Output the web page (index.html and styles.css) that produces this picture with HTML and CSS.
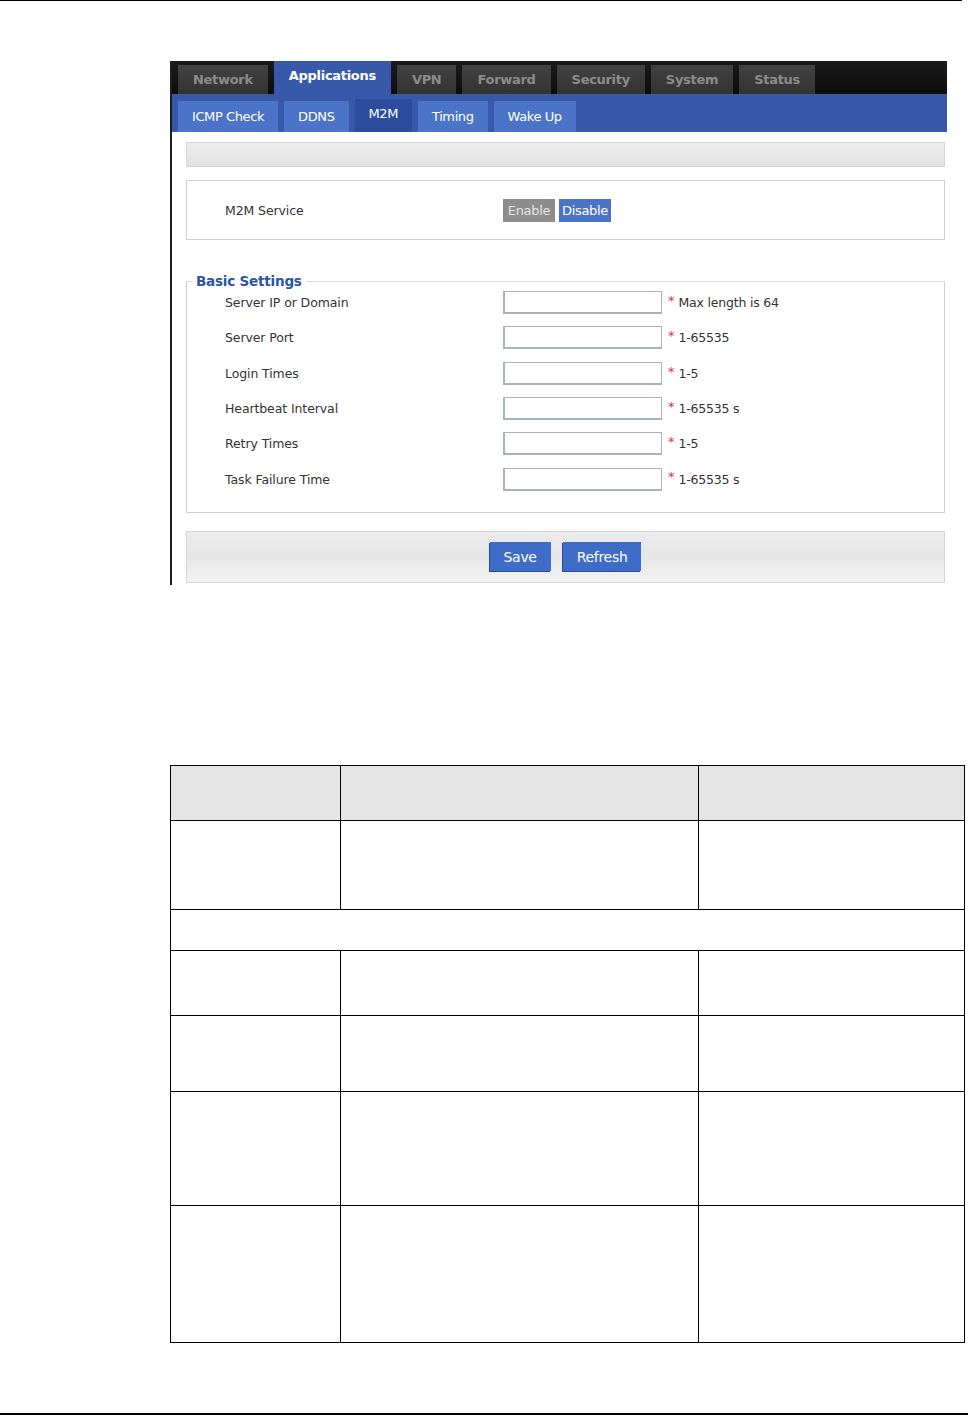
FILE: index.html
```html
<!DOCTYPE html>
<html lang="en">
<head>
  <meta charset="UTF-8">
  <title>M2M</title>
  <link rel="stylesheet" href="styles.css">
</head>
<body>
  <div class="rule top"></div>

  <div class="shot">
    <div class="main-tabs">
      <span class="tab">Network</span>
      <span class="tab active">Applications</span>
      <span class="tab">VPN</span>
      <span class="tab">Forward</span>
      <span class="tab">Security</span>
      <span class="tab">System</span>
      <span class="tab">Status</span>
    </div>
    <div class="sub-tabs">
      <span class="sub">ICMP Check</span>
      <span class="sub">DDNS</span>
      <span class="sub active">M2M</span>
      <span class="sub">Timing</span>
      <span class="sub">Wake Up</span>
    </div>

    <div class="content">
      <div class="bar"></div>

      <div class="box service">
        <span class="label">M2M Service</span>
        <span class="switch">
          <button class="btn off">Enable</button>
          <button class="btn on">Disable</button>
        </span>
      </div>

      <fieldset class="box settings">
        <legend>Basic Settings</legend>
        <div class="row"><span class="label">Server IP or Domain</span><input type="text"><span class="req">*</span><span class="hint">Max length is 64</span></div>
        <div class="row"><span class="label">Server Port</span><input type="text"><span class="req">*</span><span class="hint">1-65535</span></div>
        <div class="row"><span class="label">Login Times</span><input type="text"><span class="req">*</span><span class="hint">1-5</span></div>
        <div class="row"><span class="label">Heartbeat Interval</span><input type="text"><span class="req">*</span><span class="hint">1-65535 s</span></div>
        <div class="row"><span class="label">Retry Times</span><input type="text"><span class="req">*</span><span class="hint">1-5</span></div>
        <div class="row"><span class="label">Task Failure Time</span><input type="text"><span class="req">*</span><span class="hint">1-65535 s</span></div>
      </fieldset>

      <div class="actions">
        <button class="btn save">Save</button>
        <button class="btn refresh">Refresh</button>
      </div>
    </div>
  </div>

  <table class="params">
    <thead>
      <tr class="r-head"><th></th><th></th><th></th></tr>
    </thead>
    <tbody>
      <tr class="r1"><td></td><td></td><td></td></tr>
      <tr class="r2"><td colspan="3"></td></tr>
      <tr class="r3"><td></td><td></td><td></td></tr>
      <tr class="r4"><td></td><td></td><td></td></tr>
      <tr class="r5"><td></td><td></td><td></td></tr>
      <tr class="r6"><td></td><td></td><td></td></tr>
    </tbody>
  </table>

  <div class="rule bottom"></div>
</body>
</html>
```

FILE: styles.css
```css
:root {
  --blue: #3858a9;
  --blue-tab: #4b74c8;
  --blue-dark: #2c4d9c;
  --line: #cfcfcf;
  --text: #333;
}

body {
  margin: 0;
  background: #fff;
  font-family: 'DejaVu Sans', Verdana, sans-serif;
  color: var(--text);
}

.rule {
  height: 1px;
  background: #000;
}

.rule.top {
  width: 962px;
}

.rule.bottom {
  width: 968px;
  margin-top: 70px;
  height: 2px;
}

.shot {
  margin: 60px 0 0 170px;
  width: 775px;
  border-left: 2px solid #1e1e1e;
}

.main-tabs {
  display: flex;
  align-items: flex-end;
  gap: 6px;
  height: 33px;
  padding-left: 6px;
  background: linear-gradient(#1b1b1b, #0c0c0c);
}

.tab {
  display: flex;
  align-items: center;
  justify-content: center;
  height: 29px;
  padding: 0 15px;
  background: linear-gradient(#424242, #333);
  color: #8c8c8c;
  font-size: 13px;
  font-weight: bold;
  letter-spacing: -0.3px;
}

.tab.active {
  height: 33px;
  padding: 0 15px 4px;
  box-sizing: border-box;
  background: var(--blue);
  color: #fff;
}

.sub-tabs {
  display: flex;
  align-items: flex-end;
  gap: 6px;
  height: 38px;
  padding-left: 6px;
  background: var(--blue);
}

.sub {
  display: flex;
  align-items: center;
  justify-content: center;
  height: 31px;
  padding: 0 14px;
  background: var(--blue-tab);
  color: #fff;
  font-size: 13px;
  letter-spacing: -0.4px;
}

.sub.active {
  background: var(--blue-dark);
  height: 33px;
  padding-bottom: 4px;
  box-sizing: border-box;
}

.content {
  padding: 10px 2px 2px 14px;
}

.bar {
  height: 23px;
  border: 1px solid #d6d6d6;
  background: linear-gradient(#ececec, #e3e3e3);
}

.box {
  border: 1px solid var(--line);
  margin: 0;
}

.service {
  display: flex;
  align-items: center;
  height: 58px;
  margin-top: 13px;
  padding-left: 38px;
}

.label {
  width: 278px;
  font-size: 12.5px;
  letter-spacing: -0.1px;
}

.switch {
  display: flex;
  gap: 4px;
}

.btn {
  border: none;
  color: #fff;
  font-family: inherit;
  font-size: 13px;
  letter-spacing: -0.3px;
  cursor: pointer;
}

.btn.off {
  background: #8d8d8d;
  color: #e4e4e4;
  width: 52px;
  height: 23px;
  padding: 0;
}

.btn.on {
  background: var(--blue-tab);
  width: 52px;
  height: 23px;
  padding: 0;
}

.settings {
  margin-top: 33px;
  padding: 0 0 15px 38px;
  border-top-color: #dcdcdc;
}

.settings legend {
  margin-left: -33px;
  padding: 0 4px;
  color: #2c55a4;
  font-size: 13.5px;
  font-weight: bold;
  letter-spacing: -0.2px;
}

.row {
  display: flex;
  align-items: center;
  height: 35.3px;
}

.row:first-of-type {
  margin-top: -4px;
}

.row input {
  width: 156px;
  height: 20px;
  margin: 0;
  padding: 0;
  border: 2px solid #a9b3bf;
  border-width: 1px 1px 2px 2px;
  background: #fff;
}

.req {
  align-self: flex-start;
  margin: 8px 4px 0 6px;
  color: #d9334a;
  font-size: 13px;
}

.hint {
  font-size: 12.5px;
  letter-spacing: -0.2px;
}

.actions {
  display: flex;
  justify-content: center;
  align-items: center;
  gap: 12px;
  height: 50px;
  margin-top: 18px;
  border: 1px solid #d6d6d6;
  background: linear-gradient(#ececec 0%, #e6e6e6 45%, #f2f2f2 100%);
}

.btn.save,
.btn.refresh {
  height: 29px;
  padding: 0 14px;
  background: #3e6cc8;
  box-shadow: -1px 1px 0 #2a4c94;
  font-size: 14px;
}

.params {
  margin: 180px 0 0 170px;
  width: 795px;
  border-collapse: collapse;
}

.params th,
.params td {
  border: 1.5px solid #000;
  padding: 0;
}

.params th:nth-child(1) { width: 169px; }
.params th:nth-child(2) { width: 357px; }

.r-head { height: 55px; background: #e5e5e5; }
.r1 { height: 89px; }
.r2 { height: 41px; }
.r3 { height: 65px; }
.r4 { height: 76px; }
.r5 { height: 114px; }
.r6 { height: 137px; }
```
